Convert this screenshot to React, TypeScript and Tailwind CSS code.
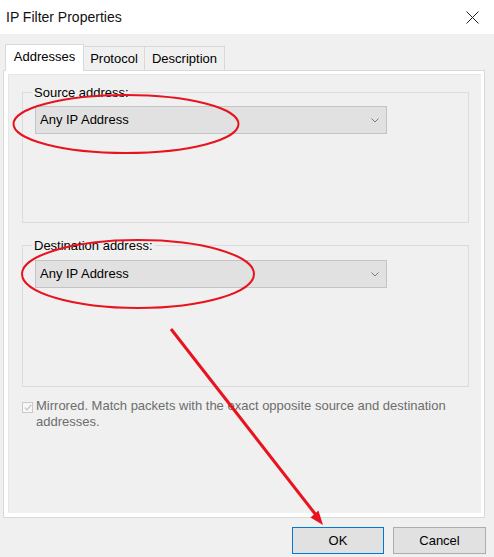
function Chevron() {
  return (
    <svg width="8" height="5" viewBox="0 0 8 5" className="text-[#7a7a7a]">
      <polyline points="0.5,0.5 4,4 7.5,0.5" fill="none" stroke="currentColor" strokeWidth="1" />
    </svg>
  )
}

function Dropdown({ value, top }: { value: string; top: string }) {
  return (
    <div
      className={`${top} ml-[12px] w-[352px] h-[28px] bg-[#e1e1e1] border border-[#c4c4c4] flex items-center justify-between pl-[4px] pr-[7px]`}
    >
      <span>{value}</span>
      <Chevron />
    </div>
  )
}

function GroupBox({ label, className, children }: { label: string; className: string; children: React.ReactNode }) {
  return (
    <div className={`relative ml-[13px] w-[447px] border border-[#dcdcdc] ${className}`}>
      <span className="absolute -top-[8px] left-[9px] bg-[#f0f0f0] px-[2px] leading-[15px]">{label}</span>
      {children}
    </div>
  )
}

export default function App() {
  return (
    <div className="relative w-[494px] h-[557px] overflow-hidden bg-[#f0f0f0] text-[13px] text-black font-['Liberation_Sans',Arial,sans-serif]">
      {/* title bar */}
      <div className="h-[34px] bg-white flex items-center justify-between pl-[6px] pr-[15px]">
        <span className="text-[14px] text-[#111]">IP Filter Properties</span>
        <svg width="13" height="13" viewBox="0 0 13 13">
          <path d="M0.5 0.5 L12.5 12.5 M12.5 0.5 L0.5 12.5" stroke="#222" strokeWidth="1" />
        </svg>
      </div>

      <div className="pl-[3px] pt-[10px]">
        {/* tabs */}
        <div className="flex items-end ml-[2px]">
          <div className="relative z-10 -mb-px h-[27px] w-[79px] bg-white border border-b-0 border-[#d9d9d9] flex items-center justify-center pb-[2px]">
            Addresses
          </div>
          <div className="h-[24px] w-[61px] border-t border-r border-[#d9d9d9] flex items-center justify-center pt-[1px]">
            Protocol
          </div>
          <div className="h-[24px] w-[80px] border-t border-r border-[#d9d9d9] flex items-center justify-center pt-[1px]">
            Description
          </div>
        </div>

        {/* tab panel */}
        <div className="w-[482px] h-[448px] border border-[#d9d9d9] bg-white pl-[4px] pr-[3px] pt-[3px] pb-[4px]">
          <div className="h-full bg-[#f0f0f0] border-l border-t border-[#e6e6e6] pt-[17px]">
            <GroupBox label="Source address:" className="h-[131px]">
              <Dropdown value="Any IP Address" top="mt-[13px]" />
            </GroupBox>

            <GroupBox label="Destination address:" className="mt-[22px] h-[142px]">
              <Dropdown value="Any IP Address" top="mt-[14px]" />
            </GroupBox>

            <div className="mt-[11px] ml-[13px] flex items-start gap-[3px] text-[#6d6d6d]">
              <div className="mt-[4px] w-[11px] h-[11px] border border-[#c9c9c9] bg-[#f7f7f7] flex items-center justify-center shrink-0">
                <svg width="8" height="7" viewBox="0 0 8 7">
                  <polyline points="0.8,3.6 3,5.8 7.2,0.8" fill="none" stroke="#c2c2c2" strokeWidth="1.2" />
                </svg>
              </div>
              <p className="w-[432px] leading-[16px]">
                Mirrored. Match packets with the exact opposite source and destination addresses.
              </p>
            </div>
          </div>
        </div>
      </div>

      {/* buttons */}
      <div className="mt-[9px] flex justify-end gap-[9px] pr-[8px]">
        <button className="w-[92px] h-[27px] bg-[#e1e1e1] border border-[#0078d7] text-[13px]">OK</button>
        <button className="w-[93px] h-[27px] bg-[#e1e1e1] border border-[#adadad] text-[13px]">Cancel</button>
      </div>

      {/* red annotations */}
      <svg className="absolute inset-0 pointer-events-none" width="494" height="557" viewBox="0 0 494 557">
        <ellipse cx="126" cy="124" rx="112.5" ry="29" fill="none" stroke="#e8131f" strokeWidth="2" />
        <ellipse cx="138" cy="274" rx="116" ry="34" fill="none" stroke="#e8131f" strokeWidth="2" />
        <line x1="171" y1="329" x2="316" y2="515" stroke="#e8131f" strokeWidth="3" />
        <polygon points="323,525 310.5,517.5 318.5,510.5" fill="#e8131f" />
      </svg>
    </div>
  )
}
